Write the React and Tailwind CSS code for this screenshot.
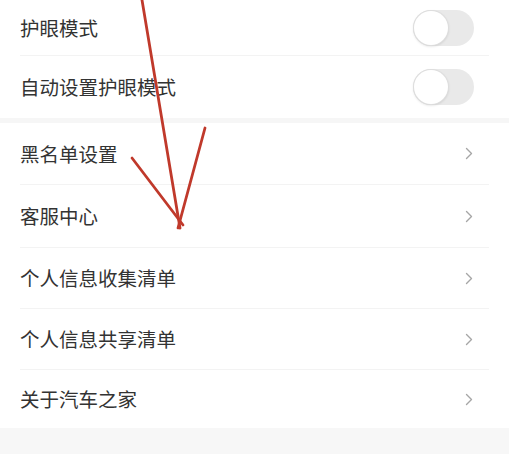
import React from "react";

const Toggle = () => (
  <div className="relative h-[36px] w-[61px] rounded-full bg-[#e9e9e9]">
    <div className="absolute left-[1px] top-[1px] h-[34px] w-[34px] rounded-full bg-white shadow-[0_1px_3px_rgba(0,0,0,0.18)] ring-1 ring-[#dedede]" />
  </div>
);

const Chevron = () => (
  <svg width="8" height="13" viewBox="0 0 8 13" fill="none">
    <path d="M1.5 1.5 L6.5 6.5 L1.5 11.5" stroke="#a6a6a6" strokeWidth="1.4" strokeLinecap="round" strokeLinejoin="round" />
  </svg>
);

const Row = ({ label, height, right }) => (
  <div className={`flex items-center justify-between pl-[20px] pr-[36px] ${height}`}>
    <span className="text-[19.5px] leading-none text-[#333333]">{label}</span>
    {right}
  </div>
);

const Divider = () => <div className="mx-[20px] h-px bg-[#f3f3f3]" />;

export default function App() {
  return (
    <div
      className="relative h-[454px] w-[509px] overflow-hidden bg-white"
      style={{ fontFamily: '"Noto Sans CJK SC", "Noto Sans", sans-serif' }}
    >
      <Row label="护眼模式" height="h-[55px]" right={<div className="-mr-[1px]"><Toggle /></div>} />
      <Divider />
      <Row label="自动设置护眼模式" height="h-[62px]" right={<div className="-mr-[1px]"><Toggle /></div>} />
      <div className="h-[5px] bg-[#f6f6f6]" />
      <Row label="黑名单设置" height="h-[61px]" right={<Chevron />} />
      <Divider />
      <Row label="客服中心" height="h-[62px]" right={<Chevron />} />
      <Divider />
      <Row label="个人信息收集清单" height="h-[60px]" right={<Chevron />} />
      <Divider />
      <Row label="个人信息共享清单" height="h-[60px]" right={<Chevron />} />
      <Divider />
      <Row label="关于汽车之家" height="h-[58px]" right={<Chevron />} />
      <div className="h-[30px] bg-[#f7f7f7]" />

      <svg className="pointer-events-none absolute inset-0" width="509" height="454" viewBox="0 0 509 454">
        <g stroke="#c0392b" strokeWidth="2.8" strokeLinecap="round" fill="none">
          <path d="M142 0 L180 228" />
          <path d="M132 158 L183 225" />
          <path d="M205 128 L178 228" />
        </g>
      </svg>
    </div>
  );
}
